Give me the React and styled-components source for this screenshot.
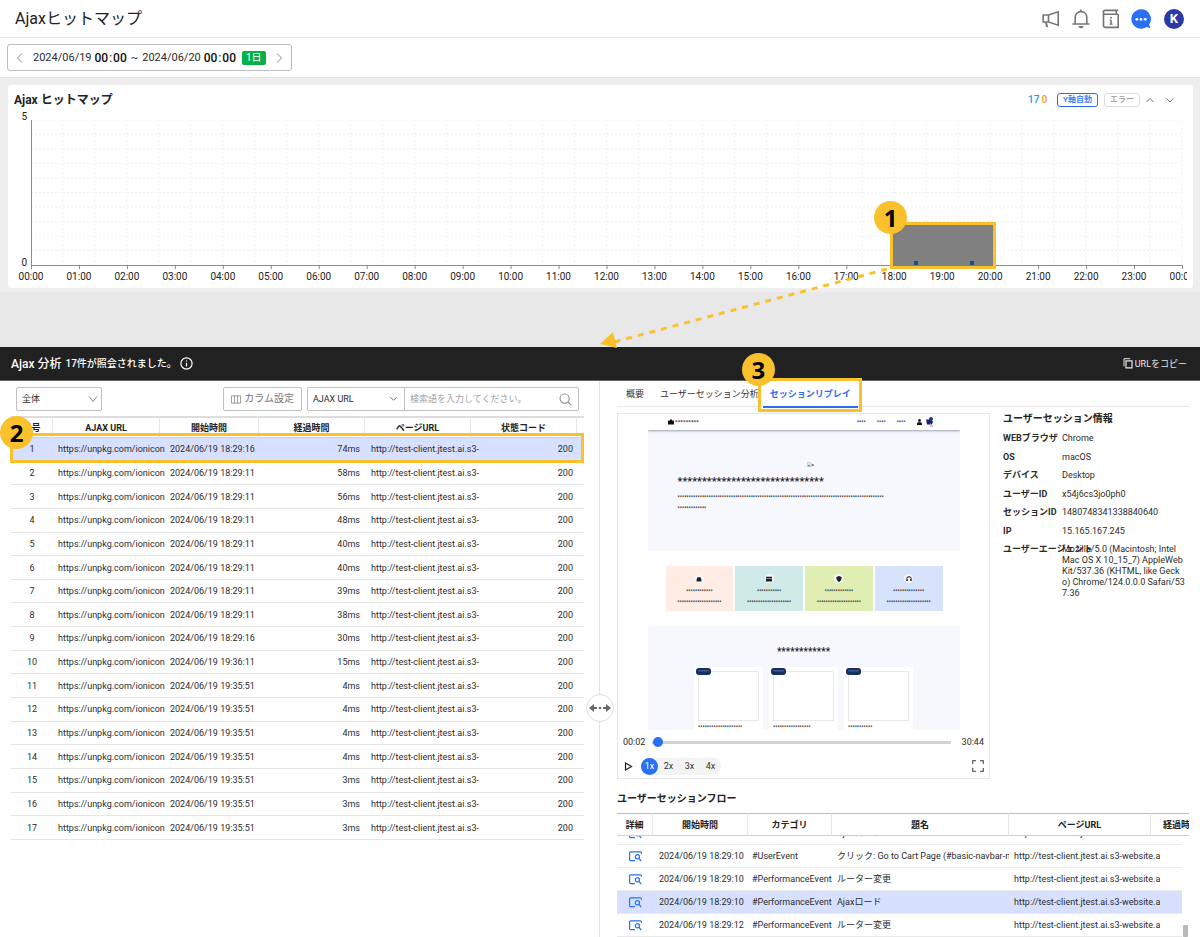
import React, { useLayoutEffect, useRef } from "react";
import styled, { createGlobalStyle, css } from "styled-components";

const GlobalStyle = createGlobalStyle`
  *, *::before, *::after { box-sizing: border-box; }
  body {
    margin: 0;
    background: #e8e8e8;
    color: #2b2b2b;
    font-family: Roboto, "Noto Sans CJK JP", sans-serif;
    font-size: 9px;
    line-height: 12px;
  }
  h1, h2, h3, p, dl, dd { margin: 0; }
  button, input, select { font: inherit; color: inherit; margin: 0; }
  svg { display: block; flex: none; }
`;

const Page = styled.div`
  position: relative;
  min-height: 100vh;
  display: flex;
  flex-direction: column;
  overflow: hidden;
`;

/* ---------- top bar ---------- */

const TopBar = styled.header`
  display: flex;
  align-items: center;
  justify-content: space-between;
  height: 38px;
  padding: 0 16px 0 15px;
  background: #fff;
  border-bottom: 1px solid #e6e6e6;
`;

const PageTitle = styled.h1`
  font-size: 16px;
  line-height: 24px;
  font-weight: 400;
  color: #222;
`;

const TopActions = styled.nav`
  display: flex;
  align-items: center;
  gap: 10px;
`;

const IconButton = styled.button`
  display: flex;
  align-items: center;
  justify-content: center;
  width: 20px;
  height: 20px;
  padding: 0;
  border: 0;
  background: none;
  color: ${(p) => p.$color || "#757575"};
  cursor: pointer;
`;

const Avatar = styled.button`
  width: 20px;
  height: 20px;
  margin-left: 3px;
  padding: 0;
  border: 0;
  border-radius: 50%;
  background: #2b38a6;
  color: #fff;
  font-size: 13px;
  font-weight: 700;
  line-height: 20px;
`;

const FilterBar = styled.div`
  display: flex;
  align-items: center;
  height: 40px;
  padding: 0 7px;
  background: #fff;
  border-bottom: 1px solid #e6e6e6;
`;

const DateRange = styled.div`
  display: flex;
  align-items: center;
  height: 27px;
  padding: 0 2px;
  border: 1px solid #bdbdbd;
  border-radius: 3px;
  font-size: 11px;
  line-height: 16px;
`;

const DateText = styled.span`
  margin-left: ${(p) => p.$gap || 0}px;
`;

const TimeText = styled.span`
  margin-left: 3px;
  font-size: 12px;
  font-weight: 500;
  color: #111;
  i {
    margin: 0 1px;
    font-style: normal;
    font-weight: 400;
  }
`;

const DayTag = styled.span`
  margin: 0 3px 0 6px;
  padding: 0 4px;
  border-radius: 2px;
  background: #05b144;
  color: #fff;
  font-size: 10px;
  line-height: 14px;
`;

/* ---------- heat map ---------- */

const ChartArea = styled.section`
  padding: 7px 7px 4px 8px;
  background: #eeeeee;
`;

const ChartCard = styled.div`
  padding-right: 6px;
  border-radius: 3px;
  background: #fff;
`;

const ChartHead = styled.div`
  display: flex;
  align-items: center;
  justify-content: space-between;
  height: 27px;
  padding: 3px 7px 0 6px;
`;

const ChartTitle = styled.h2`
  font-size: 12px;
  line-height: 16px;
  font-weight: 700;
  color: #222;
`;

const ChartTools = styled.div`
  display: flex;
  align-items: center;
`;

const Count = styled.span`
  margin-right: 2px;
  color: ${(p) => p.$color};
  font-size: 10px;
  font-weight: 500;
`;

const Chip = styled.button`
  height: 14px;
  margin-left: ${(p) => (p.$active ? 8 : 6)}px;
  padding: 0 5px;
  border: 1px solid ${(p) => (p.$active ? "#2f6bf3" : "#dddddd")};
  border-radius: 3px;
  background: #fff;
  color: ${(p) => (p.$active ? "#2f6bf3" : "#9a9a9a")};
  font-size: 8px;
  font-weight: 500;
  line-height: 12px;
`;

const Plot = styled.div`
  position: relative;
  svg {
    width: 100%;
    height: auto;
  }
  text {
    font-size: 10px;
    fill: #222;
  }
`;

/* ---------- callouts ---------- */

const Mark = styled.div`
  position: absolute;
  z-index: 3;
  left: ${(p) => p.$left};
  right: ${(p) => p.$right || "auto"};
  top: ${(p) => p.$top};
  width: ${(p) => p.$width || "auto"};
  height: ${(p) => p.$height};
  border: 3px solid #fbc12c;
  pointer-events: none;
`;

const MarkNumber = styled.span`
  position: absolute;
  left: ${(p) => p.$left};
  top: ${(p) => p.$top};
  width: 33px;
  height: 33px;
  border-radius: 50%;
  background: #fbc12c;
  color: #000;
  font-family: "Open Sans", "Noto Sans", sans-serif;
  font-size: 24px;
  font-weight: 700;
  line-height: 33px;
  text-align: center;
`;

const Arrow = styled.svg`
  position: absolute;
  z-index: 2;
  left: 600px;
  top: 265px;
  pointer-events: none;
`;

/* ---------- analysis panel ---------- */

const Analysis = styled.section`
  position: relative;
  flex: 1;
  display: flex;
  flex-direction: column;
  margin-top: 55px;
  background: #fff;
`;

const AnalysisBar = styled.header`
  display: flex;
  align-items: center;
  height: 34px;
  padding: 0 13px 0 11px;
  background: #212121;
  border-bottom: 1px solid #666;
  color: #fff;
`;

const AnalysisTitle = styled.h2`
  margin-right: 4px;
  font-size: 12px;
  font-weight: 500;
  line-height: 16px;
`;

const AnalysisNote = styled.p`
  margin-right: 3px;
  font-size: 10px;
  font-weight: 500;
`;

const CopyButton = styled.button`
  display: flex;
  align-items: center;
  gap: 2px;
  margin-left: auto;
  padding: 0;
  border: 0;
  background: none;
  color: #e8e8e8;
  font-size: 9px;
`;

const Split = styled.div`
  position: relative;
  flex: 1;
  display: grid;
  grid-template-columns: minmax(0, 1fr) minmax(0, 1fr);
`;

const ListPane = styled.div`
  padding: 6px 15px 0 11px;
  border-right: 1px solid #e2e2e2;
`;

const Handle = styled.button`
  position: absolute;
  left: 50%;
  top: 313px;
  width: 28px;
  height: 28px;
  margin-left: -14px;
  padding: 0 2px;
  border: 1px solid #e0e0e0;
  border-radius: 50%;
  background: #fff;
  color: #666;
`;

const ListTools = styled.div`
  display: flex;
  align-items: stretch;
  height: 24px;
  margin-bottom: 5px;
  padding: 0 5px;
`;

const fieldBox = css`
  border: 1px solid #bfbfbf;
  border-radius: 2px;
  background: #fff;
`;

const SelectWrap = styled.label`
  position: relative;
  display: block;
  width: ${(p) => p.$width}px;
  select {
    appearance: none;
    width: 100%;
    height: 100%;
    padding: 0 5px;
    ${fieldBox}
    ${(p) => p.$joined && "border-radius: 2px 0 0 2px;"}
  }
  svg {
    position: absolute;
    right: ${(p) => (p.$joined ? 7 : 4)}px;
    top: 50%;
    margin-top: -5px;
    pointer-events: none;
  }
`;

const ColumnButton = styled.button`
  display: flex;
  align-items: center;
  gap: 3px;
  margin: 0 5px 0 auto;
  padding: 0 7px;
  ${fieldBox}
  color: #777;
  font-size: 10px;
`;

const SearchBox = styled.label`
  display: flex;
  align-items: center;
  width: 175px;
  margin-left: -1px;
  padding: 0 6px 0 5px;
  ${fieldBox}
  border-radius: 0 2px 2px 0;
  color: #8c8c8c;
  input {
    flex: 1;
    min-width: 0;
    padding: 0;
    border: 0;
    outline: 0;
    background: none;
  }
  input::placeholder { color: #a3a3a3; opacity: 1; }
`;

const TableWrap = styled.div`
  position: relative;
`;

const dataTable = css`
  width: 100%;
  table-layout: fixed;
  border-collapse: separate;
  border-spacing: 0;
  th, td {
    padding: 0;
    overflow: hidden;
    white-space: nowrap;
  }
  th {
    color: #222;
    font-weight: 700;
  }
`;

const ListTable = styled.table`
  ${dataTable}
  height: 424px;
  thead th {
    height: 22px;
    border-top: 2px solid #dddddd;
    border-bottom: 1px solid #cfcfcf;
    border-right: 1px solid #e6e6e6;
  }
  thead th:last-child { border-right: 0; }
  tbody td { border-bottom: 1px solid #e6e6e6; }
`;

const Col = styled.col`
  width: ${(p) => (p.$width ? `${p.$width}px` : "auto")};
`;

const Cell = styled.td`
  text-align: ${(p) => p.$align || "left"};
  background: ${(p) => (p.$selected ? "#d7e1ff" : "transparent")};
  && {
    padding-left: ${(p) => p.$left || 0}px;
    padding-right: ${(p) => p.$right || 0}px;
    ${(p) => p.$spill && "overflow: visible;"}
  }
`;

const Clip = styled.span`
  display: block;
  width: ${(p) => p.$width}px;
  overflow: hidden;
`;

/* ---------- detail pane ---------- */

const DetailPane = styled.div`
  padding: 0 11px 0 17px;
`;

const Tabs = styled.div`
  display: flex;
  height: 26px;
  padding-left: 5px;
  border-bottom: 1px solid #e8e8e8;
`;

const TabItem = styled.div`
  position: relative;
  display: flex;
`;

const Tab = styled.button`
  height: 27px;
  padding: 0 ${(p) => (p.$active ? 7 : 4)}px;
  border: 0;
  border-bottom: 2px solid ${(p) => (p.$active ? "#2f6bf3" : "transparent")};
  margin-left: ${(p) => p.$gap || 0}px;
  background: none;
  color: ${(p) => (p.$active ? "#2f6bf3" : "#333")};
  font-weight: ${(p) => (p.$active ? 700 : 400)};
  white-space: nowrap;
`;

const DetailTop = styled.div`
  display: grid;
  grid-template-columns: minmax(0, 1fr) 186px;
  gap: 13px;
  margin-top: 6px;
`;

const Player = styled.div`
  display: flex;
  flex-direction: column;
  height: 366px;
  border: 1px solid #e6e6e6;
`;

const Stage = styled.div`
  width: 312px;
  height: 316px;
  margin: 0 auto;
  overflow: hidden;
  line-height: 6px;
`;

const ShopNav = styled.div`
  position: relative;
  display: flex;
  align-items: center;
  height: 16px;
  padding: 0 26px 0 20px;
  background: #fff;
  box-shadow: 0 1px 2px #9aa0ac;
`;

const NavLinks = styled.div`
  display: flex;
  align-items: center;
  gap: 11px;
  margin-left: auto;
`;

const NavIcons = styled.div`
  display: flex;
  align-items: center;
  gap: 4px;
`;

const Masked = styled.p`
  font-size: ${(p) => p.$size || 5}px;
  font-weight: 500;
  line-height: ${(p) => (p.$size > 8 ? 12 : 6)}px;
  color: #1d2026;
  white-space: nowrap;
`;

const Hero = styled.div`
  height: 121px;
  padding: 32px 30px 0;
  background: #f7f8fd;
`;

const BrokenImage = styled.div`
  display: flex;
  align-items: center;
  margin: 0 0 9px 129px;
`;

const HeroLines = styled.div`
  display: grid;
  gap: 5px;
  margin-top: 6px;
`;

const Features = styled.div`
  display: grid;
  grid-template-columns: repeat(4, 1fr);
  gap: 2px;
  padding: 15px 17px 15px 18px;
`;

const Feature = styled.div`
  display: flex;
  flex-direction: column;
  align-items: center;
  gap: 5px;
  height: 45px;
  padding-top: 8px;
  background: ${(p) => p.$color};
`;

const FeatureIcon = styled.span`
  display: flex;
  align-items: center;
  justify-content: center;
  width: 9px;
  height: 9px;
  border-radius: 50%;
  background: #f6f7fa;
`;

const Products = styled.div`
  display: flex;
  flex-direction: column;
  align-items: center;
  height: 104px;
  padding-top: 20px;
  background: #f7f8fd;
`;

const ProductRow = styled.div`
  display: grid;
  grid-template-columns: repeat(3, 69px);
  gap: 6px;
  margin-top: 9px;
`;

const Product = styled.div`
  height: 63px;
  padding: 4px 4px 0;
  background: #fff;
`;

const ProductPhoto = styled.div`
  position: relative;
  height: 50px;
  margin-bottom: 3px;
  border: 1px solid #e8e8e8;
`;

const ProductTag = styled.span`
  position: absolute;
  left: -3px;
  top: -4px;
  width: 15px;
  height: 7px;
  border-radius: 3px;
  background: #14305f;
  color: #9fb3d9;
  font-size: 4px;
  line-height: 8px;
  text-align: center;
`;

const SeekRow = styled.div`
  display: flex;
  align-items: center;
  gap: 7px;
  height: 24px;
  padding: 0 5px;
  input {
    appearance: none;
    flex: 1;
    min-width: 0;
    height: 10px;
    margin-right: 4px;
    background: none;
  }
  input::-webkit-slider-runnable-track {
    height: 3px;
    background: #d3d3d3;
  }
  input::-webkit-slider-thumb {
    appearance: none;
    width: 10px;
    height: 10px;
    margin-top: -4px;
    border-radius: 50%;
    background: #2970f5;
  }
`;

const ControlRow = styled.div`
  display: flex;
  align-items: center;
  height: 24px;
  padding: 0 4px 0 0;
  ${IconButton}:last-child { margin-left: auto; width: 14px; }
`;

const Speeds = styled.div`
  display: flex;
  align-items: center;
  margin-left: 3px;
  border-radius: 9px;
  background: #f3f3f3;
`;

const Speed = styled.button`
  width: ${(p) => (p.$active ? 17 : 21)}px;
  height: 17px;
  padding: 0;
  border: 0;
  border-radius: 9px;
  background: ${(p) => (p.$active ? "#2970f5" : "transparent")};
  color: ${(p) => (p.$active ? "#fff" : "#333")};
  line-height: 17px;
`;

const Info = styled.aside`
  min-width: 0;
`;

const BlockTitle = styled.h3`
  color: #222;
  font-size: 10px;
  line-height: 12px;
  font-weight: 700;
`;

const InfoList = styled.dl`
  display: grid;
  grid-template-rows: repeat(7, 1fr);
  height: 130px;
  margin-top: 8px;
`;

const InfoRow = styled.div`
  display: grid;
  grid-template-columns: 59px minmax(0, 1fr);
  min-height: 0;
  padding-right: 4px;
  line-height: 11px;
  dt {
    font-weight: 700;
    white-space: nowrap;
  }
  dd { word-break: break-all; }
`;

const FlowTitle = styled(BlockTitle)`
  margin: 14px 0 8px;
`;

const FlowWrap = styled.div`
  position: relative;
`;

const FlowScroll = styled.div`
  height: 124px;
  overflow: hidden;
`;

const FlowTable = styled.table`
  ${dataTable}
  thead th {
    position: sticky;
    top: 0;
    z-index: 1;
    height: 23px;
    background: #fff;
    border-top: 1px solid #bdbdbd;
    border-bottom: 1px solid #cfcfcf;
    border-right: 1px solid #e6e6e6;
  }
  thead th:last-child {
    padding-left: 12px;
    border-right: 0;
    text-align: left;
  }
  tbody td {
    height: 23px;
    border-bottom: 1px solid #e9e9e9;
  }
  tbody td:last-child { border-bottom: 0; }
`;

const DetailButton = styled.button`
  display: block;
  margin: 0 auto;
  padding: 0;
  border: 0;
  background: none;
  color: #2970f5;
`;

const ScrollThumb = styled.span`
  position: absolute;
  right: 1px;
  bottom: 0;
  width: 5px;
  height: 12px;
  border-radius: 1px;
  background: #b9b9b9;
`;

/* ---------- icons ---------- */

function Chevron({ dir, size = 10, color = "#8a8a8a", width = 1 }) {
  const d = {
    left: "M7 0.5 2.5 5 7 9.5",
    right: "M3 0.5 7.5 5 3 9.5",
    up: "M1.5 7 5 3.5 8.5 7",
    down: "M1.5 3.5 5 7 8.5 3.5",
    wide: "M1 2.5 5 7.5 9 2.5",
  }[dir];
  return (
    <svg width={size} height={size} viewBox="0 0 10 10" fill="none" stroke={color} strokeWidth={width} aria-hidden="true">
      <path d={d} />
    </svg>
  );
}

const MegaphoneIcon = () => (
  <svg width="18" height="18" viewBox="0 0 18 18" fill="none" stroke="currentColor" strokeWidth="1.6">
    <path d="M6.5 5 16.2 1.800v13.400L6.500 12zM6.500 5H1.200v7h5.300" />
    <path d="M3.800 12.500l1.400 4.500" strokeWidth="2" />
  </svg>
);

const BellIcon = () => (
  <svg width="20" height="20" viewBox="0 0 20 20" fill="none" stroke="currentColor" strokeWidth="1.6">
    <path d="M4.2 14.5V8.6C4.2 5 6.6 2.600 10 2.600s5.800 2.400 5.800 6v5.900M1.400 15h17.200M10 .4v2.200" />
    <path d="M7.400 17h5.200c-.3 1.600-1.400 2.300-2.600 2.300S7.700 18.600 7.400 17z" fill="currentColor" stroke="none" />
  </svg>
);

const GuideIcon = () => (
  <svg width="18" height="20" viewBox="0 0 18 20" fill="none" stroke="currentColor" strokeWidth="1.6">
    <path d="M16.200 5.200H3.200a1.800 1.800 0 0 1 0-3.800h13M1.500 3.300v13.500c0 1 .6 1.600 1.600 1.600h13.100V5.200M14.300 1.400v3.600" />
    <path d="M9 8v1.700M9 11v4.600" />
    <path d="M7.600 11H9M7.400 15.200h3.300" strokeWidth="1" />
  </svg>
);

const ChatIcon = () => (
  <svg width="20" height="20" viewBox="0 0 20 20">
    <path d="M10 .3A9.700 9.700 0 1 0 15.700 17.900L19.500 19.300 18.100 15.600A9.700 9.700 0 0 0 10 .3z" fill="#2970f5" />
    <g fill="#fff">
      <circle cx="5.800" cy="10.300" r="1.400" />
      <circle cx="10" cy="10.300" r="1.400" />
      <circle cx="14.200" cy="10.300" r="1.400" />
    </g>
  </svg>
);

const InfoIcon = () => (
  <svg width="13" height="13" viewBox="0 0 13 13" fill="none" stroke="#fff" strokeWidth="1.2">
    <circle cx="6.5" cy="6.5" r="5.6" />
    <path d="M6.500 5.700v3.800M6.500 3.400v1.200" />
  </svg>
);

const CopyIcon = () => (
  <svg width="10" height="11" viewBox="0 0 10 11" fill="none" stroke="currentColor">
    <path d="M3 2.800h6v7H3z" strokeWidth="1.2" />
    <path d="M1 8.300V.7h6.200" />
  </svg>
);

const ColumnsIcon = () => (
  <svg width="10" height="9" viewBox="0 0 11 9" fill="none" stroke="currentColor">
    <path d="M.5.500h10v8H.5zM3.800.500v8M7.200.500v8" strokeWidth=".8" />
  </svg>
);

const SearchIcon = () => (
  <svg width="13" height="13" viewBox="0 0 13 13" fill="none" stroke="currentColor" strokeWidth="1.1">
    <circle cx="5.600" cy="5.600" r="4.600" />
    <path d="M9 9l3.400 3.400" />
  </svg>
);

const ResizeIcon = () => (
  <svg width="22" height="10" viewBox="0 0 22 10" fill="currentColor" aria-hidden="true">
    <path d="M0 5l5-4v3h3v2H5v3zM22 5l-5-4v3h-3v2h3v3z" />
    <circle cx="11" cy="5" r="1.3" />
  </svg>
);

const PlayIcon = () => (
  <svg width="9" height="9" viewBox="0 0 9 9" fill="none" stroke="#222" strokeWidth="1.2">
    <path d="M1.500 1l6 3.500-6 3.500z" />
  </svg>
);

const FullscreenIcon = () => (
  <svg width="12" height="12" viewBox="0 0 12 12" fill="none" stroke="#666" strokeWidth="1.3">
    <path d="M.7 4V.7H4M8 .7h3.300V4M11.300 8v3.300H8M4 11.300H.7V8" />
  </svg>
);

const DetailIcon = () => (
  <svg width="13" height="11" viewBox="0 0 13 11" fill="none" stroke="currentColor" strokeWidth="1.2">
    <path d="M6 9.600H1.600a1 1 0 0 1-1-1V1.800a1 1 0 0 1 1-1h9.800a1 1 0 0 1 1 1v1" />
    <circle cx="8.400" cy="5.800" r="2.100" />
    <path d="M10 7.400l2.200 2.600" />
  </svg>
);

const featureShapes = {
  car: <path d="M.5 3 1.200 1h2.600L4.500 3v1.500h-4z" />,
  card: <path d="M0 .7h5v1H0zM0 2h5v2.500H0z" />,
  shield: <path d="M2.500 0 4.700.8c0 2-.6 3.500-2.200 4.200C.9 4.300.3 2.800.3.800z" />,
  headset: (
    <path d="M.3 4.200V2.500a2.200 2.200 0 0 1 4.400 0v1.700H3.500V2.600h.6a1.600 1.600 0 0 0-3.200 0h.6v1.600z" />
  ),
};

const FeatureGlyph = ({ kind }) => (
  <svg width="6" height="6" viewBox="0 0 5 5" fill="#1d2026" aria-hidden="true">
    {featureShapes[kind]}
  </svg>
);

/* ---------- data ---------- */

const stars = (n) => "*".repeat(n);

const requests = [
  ["18:29:16", "74ms"],
  ["18:29:11", "58ms"],
  ["18:29:11", "56ms"],
  ["18:29:11", "48ms"],
  ["18:29:11", "40ms"],
  ["18:29:11", "40ms"],
  ["18:29:11", "39ms"],
  ["18:29:11", "38ms"],
  ["18:29:16", "30ms"],
  ["19:36:11", "15ms"],
  ["19:35:51", "4ms"],
  ["19:35:51", "4ms"],
  ["19:35:51", "4ms"],
  ["19:35:51", "4ms"],
  ["19:35:51", "3ms"],
  ["19:35:51", "3ms"],
  ["19:35:51", "3ms"],
];

const sessionInfo = [
  ["WEBブラウザ", "Chrome"],
  ["OS", "macOS"],
  ["デバイス", "Desktop"],
  ["ユーザーID", "x54j6cs3jo0ph0"],
  ["セッションID", "1480748341338840640"],
  ["IP", "15.165.167.245"],
  [
    "ユーザーエージェント",
    "Mozilla/5.0 (Macintosh; Intel Mac OS X 10_15_7) AppleWebKit/537.36 (KHTML, like Gecko) Chrome/124.0.0.0 Safari/537.36",
  ],
];

const flow = [
  ["18:29:08", "#PerformanceEvent", "Ajaxロード"],
  ["18:29:10", "#UserEvent", "クリック: Go to Cart Page (#basic-navbar-nav"],
  ["18:29:10", "#PerformanceEvent", "ルーター変更"],
  ["18:29:10", "#PerformanceEvent", "Ajaxロード"],
  ["18:29:12", "#PerformanceEvent", "ルーター変更"],
];

const features = [
  { kind: "car", color: "#ffece5", title: 13 },
  { kind: "card", color: "#cfeae7", title: 12 },
  { kind: "shield", color: "#e1eeb3", title: 14 },
  { kind: "headset", color: "#d6e3fb", title: 15 },
];

/* ---------- parts ---------- */

function HeatMap() {
  const left = 23;
  const right = 1174;
  const top = 8;
  const bottom = 153;
  const hours = Array.from({ length: 25 }, (_, i) => i);
  const hourX = (h) => left + ((right - left) * h) / 24;
  const columns = Array.from({ length: 36 }, (_, i) => left + ((right - left) * (i + 1)) / 36);
  const rows = Array.from({ length: 10 }, (_, i) => top + ((bottom - top) * i) / 10);
  return (
    <svg viewBox="0 0 1179 176" role="img" aria-label="Ajax ヒットマップ">
      <g stroke="#f2f2f2" strokeDasharray="2 2">
        {columns.map((x) => (
          <line key={x} x1={x} x2={x} y1={top} y2={bottom} />
        ))}
        {rows.map((y) => (
          <line key={y} x1={left} x2={right} y1={y} y2={y} />
        ))}
      </g>
      <g stroke="#8c8c8c">
        <path d={`M${left + 0.5} ${top}V${bottom + 0.5}H${right + 0.5}`} fill="none" />
        {hours.map((h) => (
          <line key={h} x1={hourX(h) + 0.5} x2={hourX(h) + 0.5} y1={bottom} y2={bottom + 4} />
        ))}
      </g>
      <text x="19" y="8" textAnchor="end">5</text>
      <text x="19" y="154" textAnchor="end">0</text>
      {hours.map((h) => (
        <text key={h} x={hourX(h)} y="168" textAnchor="middle">
          {`${String(h % 24).padStart(2, "0")}:00`}
        </text>
      ))}
      <rect x="884" y="112" width="102" height="42" fill="#808080" />
      <rect x="906" y="149" width="4" height="4" fill="#174f80" />
      <rect x="962" y="149" width="4" height="4" fill="#174f80" />
    </svg>
  );
}

function RequestTable() {
  return (
    <TableWrap>
      <ListTable>
        <colgroup>
          <Col $width={42} />
          <Col $width={107} />
          <Col $width={99} />
          <Col $width={106} />
          <Col $width={106} />
          <Col $width={106} />
          <Col />
        </colgroup>
        <thead>
          <tr>
            <th>番号</th>
            <th>AJAX URL</th>
            <th>開始時間</th>
            <th>経過時間</th>
            <th>ページURL</th>
            <th>状態コード</th>
            <th aria-hidden="true" />
          </tr>
        </thead>
        <tbody>
          {requests.map(([time, elapsed], i) => {
            const s = i === 0;
            return (
              <tr key={i}>
                <Cell $selected={s} $align="center">{i + 1}</Cell>
                <Cell $selected={s} $left={5} $spill>https://unpkg.com/ionicon</Cell>
                <Cell $selected={s} $left={10}>2024/06/19 {time}</Cell>
                <Cell $selected={s} $align="right" $right={5}>{elapsed}</Cell>
                <Cell $selected={s} $left={6} $spill>
                  <Clip $width={110}>http://test-client.jtest.ai.s3-</Clip>
                </Cell>
                <Cell $selected={s} $align="right" $right={4}>200</Cell>
                <Cell $selected={s} />
              </tr>
            );
          })}
        </tbody>
      </ListTable>
      <Mark $left="-1px" $right="0" $top="17px" $height="30px">
        <MarkNumber $left="-13px" $top="-20px">2</MarkNumber>
      </Mark>
    </TableWrap>
  );
}

function Replay() {
  return (
    <Player>
      <Stage>
        <ShopNav>
          <svg width="6" height="6" viewBox="0 0 6 6" fill="#111" aria-hidden="true">
            <path d="M.5 1.500H2V.6h2v.9h1.500L6 2v3.500H0V2z" />
          </svg>
          <Masked $size={6}>&nbsp;{stars(9)}</Masked>
          <NavLinks>
            <Masked>{stars(4)}</Masked>
            <Masked>{stars(4)}</Masked>
            <Masked>{stars(4)}</Masked>
            <NavIcons>
              <svg width="5" height="6" viewBox="0 0 5 6" fill="#111" aria-hidden="true">
                <circle cx="2.500" cy="1.500" r="1.400" />
                <path d="M0 6V4.500c0-1 1-1.300 2.500-1.300S5 3.500 5 4.500V6z" />
              </svg>
              <svg width="8" height="10" viewBox="0 0 8 10" aria-hidden="true">
                <path d="M0 2.500h4l3 2-1 3H1z" fill="#1d1f7a" />
                <circle cx="5" cy="2" r="2" fill="#1b3f78" />
                <path d="M4 6l3 3.500-1.500-.3-1 .8z" fill="#fff" stroke="#555" strokeWidth=".4" />
              </svg>
            </NavIcons>
          </NavLinks>
        </ShopNav>
        <Hero>
          <BrokenImage>
            <svg width="7" height="5" viewBox="0 0 7 5" aria-hidden="true">
              <path d="M.3.300h3l1 1v3.200h-4z" fill="#dfe8f5" stroke="#8e9aa8" strokeWidth=".4" />
              <path d="M.5 4.300 2 2.500l2 1.800z" fill="#5aa45a" />
              <path d="M5 2h1.600v2H5z" fill="#777" />
            </svg>
          </BrokenImage>
          <Masked $size={11}>{stars(30)}</Masked>
          <HeroLines>
            <Masked>{stars(93)}</Masked>
            <Masked>{stars(13)}</Masked>
          </HeroLines>
        </Hero>
        <Features>
          {features.map((f) => (
            <Feature key={f.kind} $color={f.color}>
              <FeatureIcon>
                <FeatureGlyph kind={f.kind} />
              </FeatureIcon>
              <Masked>{stars(f.title - 1)}</Masked>
              <Masked>{stars(20)}</Masked>
            </Feature>
          ))}
        </Features>
        <Products>
          <Masked $size={10}>{stars(12)}</Masked>
          <ProductRow>
            {[20, 17, 11].map((n) => (
              <Product key={n}>
                <ProductPhoto>
                  <ProductTag>{stars(6)}</ProductTag>
                </ProductPhoto>
                <Masked>{stars(n)}</Masked>
              </Product>
            ))}
          </ProductRow>
        </Products>
      </Stage>
      <SeekRow>
        <span>00:02</span>
        <input type="range" min="0" max="1844" defaultValue="2" aria-label="再生位置" />
        <span>30:44</span>
      </SeekRow>
      <ControlRow>
        <IconButton aria-label="再生"><PlayIcon /></IconButton>
        <Speeds>
          {["1x", "2x", "3x", "4x"].map((s, i) => (
            <Speed key={s} $active={i === 0}>{s}</Speed>
          ))}
        </Speeds>
        <IconButton aria-label="全画面"><FullscreenIcon /></IconButton>
      </ControlRow>
    </Player>
  );
}

function SessionFlow() {
  const scroller = useRef(null);
  useLayoutEffect(() => {
    scroller.current.scrollTop = 14;
  }, []);
  return (
    <FlowWrap>
      <FlowScroll ref={scroller}>
        <FlowTable>
          <colgroup>
            <Col $width={36} />
            <Col $width={95} />
            <Col $width={84} />
            <Col />
            <Col $width={142} />
            <Col $width={31} />
            <Col $width={7} />
          </colgroup>
          <thead>
            <tr>
              <th>詳細</th>
              <th>開始時間</th>
              <th>カテゴリ</th>
              <th>題名</th>
              <th>ページURL</th>
              <th colSpan={2}>経過時間</th>
            </tr>
          </thead>
          <tbody>
            {[...flow, flow[4]].map(([time, category, title], i) => {
              const s = i === 3;
              return (
                <tr key={i}>
                  <Cell $selected={s}>
                    <DetailButton aria-label="詳細"><DetailIcon /></DetailButton>
                  </Cell>
                  <Cell $selected={s} $left={6}>2024/06/19 {time}</Cell>
                  <Cell $selected={s} $left={4}>{category}</Cell>
                  <Cell $selected={s} $left={5}>{title}</Cell>
                  <Cell $selected={s} $left={5} $spill>
                    <Clip $width={146}>http://test-client.jtest.ai.s3-website.ap</Clip>
                  </Cell>
                  <Cell $selected={s} />
                  <Cell />
                </tr>
              );
            })}
          </tbody>
        </FlowTable>
      </FlowScroll>
      <ScrollThumb />
    </FlowWrap>
  );
}

export default function App() {
  return (
    <Page>
      <GlobalStyle />
      <TopBar>
        <PageTitle>Ajaxヒットマップ</PageTitle>
        <TopActions>
          <IconButton aria-label="お知らせ"><MegaphoneIcon /></IconButton>
          <IconButton aria-label="通知"><BellIcon /></IconButton>
          <IconButton aria-label="ガイド"><GuideIcon /></IconButton>
          <IconButton aria-label="チャット"><ChatIcon /></IconButton>
          <Avatar>K</Avatar>
        </TopActions>
      </TopBar>
      <FilterBar>
        <DateRange>
          <IconButton aria-label="前へ"><Chevron dir="left" /></IconButton>
          <DateText $gap={3}>2024/06/19</DateText>
          <TimeText>00<i>:</i>00</TimeText>
          <DateText $gap={4}>~</DateText>
          <DateText $gap={4}>2024/06/20</DateText>
          <TimeText>00<i>:</i>00</TimeText>
          <DayTag>1日</DayTag>
          <IconButton aria-label="次へ"><Chevron dir="right" /></IconButton>
        </DateRange>
      </FilterBar>
      <ChartArea>
        <ChartCard>
          <ChartHead>
            <ChartTitle>Ajax ヒットマップ</ChartTitle>
            <ChartTools>
              <Count $color="#2196f3">17</Count>
              <Count $color="#f59a23">0</Count>
              <Chip $active>Y軸自動</Chip>
              <Chip>エラー</Chip>
              <IconButton aria-label="上へ"><Chevron dir="up" color="#777" /></IconButton>
              <IconButton aria-label="下へ"><Chevron dir="down" color="#777" /></IconButton>
            </ChartTools>
          </ChartHead>
          <Plot>
            <HeatMap />
            <Mark $left="882px" $top="110px" $width="106px" $height="47px">
              <MarkNumber $left="-19px" $top="-24px">1</MarkNumber>
            </Mark>
          </Plot>
        </ChartCard>
      </ChartArea>
      <Arrow width="290" height="84" viewBox="0 0 290 84" aria-hidden="true">
        <path d="M287 4 14 77" fill="none" stroke="#fbc12c" strokeWidth="3" strokeDasharray="6 6" />
        <path d="M0 79 13 67 17 83z" fill="#fbc12c" />
      </Arrow>
      <Analysis>
        <AnalysisBar>
          <AnalysisTitle>Ajax 分析</AnalysisTitle>
          <AnalysisNote>17件が照会されました。</AnalysisNote>
          <InfoIcon />
          <CopyButton><CopyIcon />URLをコピー</CopyButton>
        </AnalysisBar>
        <Split>
          <ListPane>
            <ListTools>
              <SelectWrap $width={86}>
                <select aria-label="範囲"><option>全体</option></select>
                <Chevron dir="wide" />
              </SelectWrap>
              <ColumnButton><ColumnsIcon />カラム設定</ColumnButton>
              <SelectWrap $width={98} $joined>
                <select aria-label="検索項目"><option>AJAX URL</option></select>
                <Chevron dir="down" color="#666" size={9} />
              </SelectWrap>
              <SearchBox>
                <input type="text" aria-label="検索語" placeholder="検索語を入力してください。" />
                <SearchIcon />
              </SearchBox>
            </ListTools>
            <RequestTable />
          </ListPane>
          <DetailPane>
            <Tabs role="tablist">
              <TabItem><Tab role="tab">概要</Tab></TabItem>
              <TabItem><Tab role="tab" $gap={8}>ユーザーセッション分析</Tab></TabItem>
              <TabItem>
                <Tab role="tab" aria-selected="true" $active>セッションリプレイ</Tab>
                <Mark $left="-5px" $right="-4px" $top="-3px" $height="34px">
                  <MarkNumber $left="-19px" $top="-28px">3</MarkNumber>
                </Mark>
              </TabItem>
            </Tabs>
            <DetailTop>
              <Replay />
              <Info>
                <BlockTitle>ユーザーセッション情報</BlockTitle>
                <InfoList>
                  {sessionInfo.map(([k, v]) => (
                    <InfoRow key={k}>
                      <dt>{k}</dt>
                      <dd>{v}</dd>
                    </InfoRow>
                  ))}
                </InfoList>
              </Info>
            </DetailTop>
            <FlowTitle>ユーザーセッションフロー</FlowTitle>
            <SessionFlow />
          </DetailPane>
          <Handle aria-label="幅を変更"><ResizeIcon /></Handle>
        </Split>
      </Analysis>
    </Page>
  );
}
